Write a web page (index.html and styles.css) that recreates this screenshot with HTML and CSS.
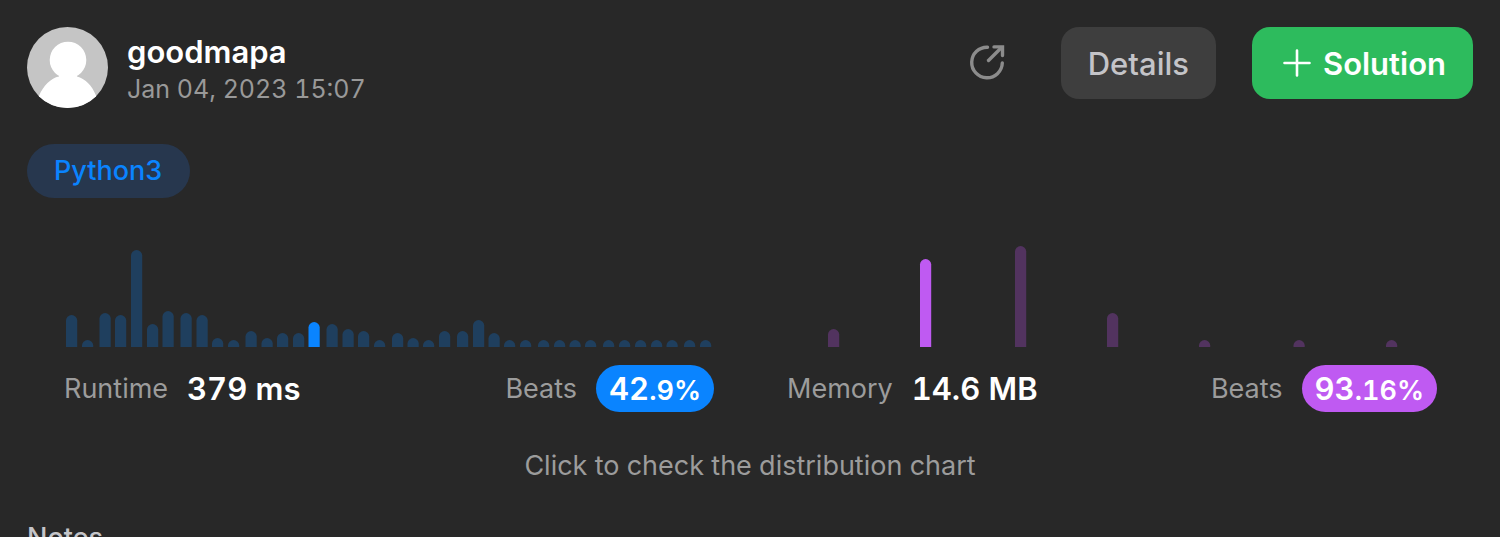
FILE: index.html
```html
<!DOCTYPE html>
<html lang="en">
<head>
<meta charset="utf-8">
<meta name="viewport" content="width=device-width, initial-scale=1">
<title>Submission</title>
<link rel="stylesheet" href="styles.css">
</head>
<body>
<main class="page">
  <header class="header">
    <svg class="avatar" viewBox="0 0 81 81" role="img" aria-label="goodmapa avatar">
      <defs><clipPath id="avatar-clip"><circle cx="40.500" cy="40.500" r="40.500"/></clipPath></defs>
      <g clip-path="url(#avatar-clip)">
        <rect width="81" height="81" fill="#c5c5c5"/>
        <circle cx="41" cy="33" r="18.300" fill="#fff"/>
        <path d="M32 46h17l1 3.500c8 2 15 9 19 19V81H12V69c4-10 12-18 20-19.500z" fill="#fff"/>
      </g>
    </svg>
    <div class="user">
      <div class="user-name">goodmapa</div>
      <time class="user-date" datetime="2023-01-04T15:07">Jan 04, 2023 15:07</time>
    </div>
    <div class="actions">
      <button class="icon-button" type="button" aria-label="Share">
        <svg class="share-icon" viewBox="0 0 40 40" fill="none" stroke="#8c8c8c" stroke-width="3.400" stroke-linecap="round" stroke-linejoin="round">
          <path d="M20.500 4.200A15.300 15.300 0 1 0 35.300 20"/>
          <path d="M21.500 17.500 34 5"/>
          <path d="M27 3.900h8.500v8.600" stroke-linejoin="miter"/>
        </svg>
      </button>
      <button class="button button-details" type="button">Details</button>
      <button class="button button-solution" type="button">
        <svg class="plus-icon" viewBox="0 0 28 28" fill="none" stroke="#fff" stroke-width="2.600" stroke-linecap="round"><path d="M14 1.500v25M1.500 14h25"/></svg>
        Solution
      </button>
    </div>
  </header>

  <div class="tags"><span class="tag">Python3</span></div>

  <section class="stats">
    <div class="stat">
      <svg class="chart runtime" viewBox="0 0 650 108" role="img" aria-label="Runtime distribution">
        <defs><path id="bar" d="M0 120V5.600a5.600 5.600 0 0 1 11.200 0V120z"/></defs>
        <g class="bars">
          <use href="#bar" x="2" y="76"/><use href="#bar" x="18" y="101"/><use href="#bar" x="35.500" y="74"/><use href="#bar" x="51" y="76"/>
          <use href="#bar" x="67" y="11"/><use href="#bar" x="83" y="85"/><use href="#bar" x="98.500" y="72"/><use href="#bar" x="116.500" y="74"/>
          <use href="#bar" x="132.500" y="76"/><use href="#bar" x="148" y="99"/><use href="#bar" x="164" y="101"/><use href="#bar" x="181.500" y="92"/>
          <use href="#bar" x="197.500" y="99"/><use href="#bar" x="213" y="94"/><use href="#bar" x="229" y="94"/><use class="current" href="#bar" x="244.500" y="83"/>
          <use href="#bar" x="262.500" y="85"/><use href="#bar" x="278.500" y="90"/><use href="#bar" x="294" y="92"/><use href="#bar" x="310" y="101"/>
          <use href="#bar" x="328" y="94"/><use href="#bar" x="343.500" y="99"/><use href="#bar" x="359" y="101"/><use href="#bar" x="375" y="92"/>
          <use href="#bar" x="393" y="92"/><use href="#bar" x="409" y="81"/><use href="#bar" x="424.500" y="94"/><use href="#bar" x="440" y="101"/>
          <use href="#bar" x="456" y="101"/><use href="#bar" x="474" y="101"/><use href="#bar" x="490" y="101"/><use href="#bar" x="505.500" y="101"/>
          <use href="#bar" x="521" y="101"/><use href="#bar" x="539" y="101"/><use href="#bar" x="555" y="101"/><use href="#bar" x="571" y="101"/>
          <use href="#bar" x="587" y="101"/><use href="#bar" x="602.500" y="101"/><use href="#bar" x="620" y="101"/><use href="#bar" x="636" y="101"/>
        </g>
      </svg>
      <div class="stat-row">
        <span class="label">Runtime</span>
        <span class="value">379 ms</span>
        <span class="label beats">Beats</span>
        <span class="badge badge-runtime">42<span class="fraction">.9%</span></span>
      </div>
    </div>
    <div class="stat">
      <svg class="chart memory" viewBox="0 0 650 108" role="img" aria-label="Memory distribution">
        <g class="bars">
          <use href="#bar" x="41" y="90"/><use class="current" href="#bar" x="133" y="20"/><use href="#bar" x="228" y="7"/><use href="#bar" x="320" y="74"/>
          <use href="#bar" x="412" y="101"/><use href="#bar" x="506.500" y="101"/><use href="#bar" x="599" y="101"/>
        </g>
      </svg>
      <div class="stat-row">
        <span class="label">Memory</span>
        <span class="value">14.6 MB</span>
        <span class="label beats">Beats</span>
        <span class="badge badge-memory">93<span class="fraction">.16%</span></span>
      </div>
    </div>
  </section>
  <p class="hint">Click to check the distribution chart</p>
  <h2 class="notes">Notes</h2>
</main>
</body>
</html>
```
FILE: styles.css
```css
* { box-sizing: border-box; }
html { scrollbar-width: none; background: #282828; }
body {
  margin: 0;
  background: #282828;
  color: #fff;
  font-family: Inter, "Liberation Sans", sans-serif;
  font-variant-numeric: tabular-nums;
}
.page { padding: 27px; }
.header { display: flex; align-items: flex-start; }
.avatar { width: 81px; height: 81px; flex: none; margin-right: 19px; }
.user { flex: 1; padding-top: 7px; }
.user-name { font-size: 31px; font-weight: 600; line-height: 36px; }
.user-date { display: block; font-size: 25px; line-height: 38px; color: #999; }
.actions { display: flex; align-items: center; gap: 36px; }
button { border: 0; margin: 0; font-family: inherit; cursor: pointer; }
.icon-button { display: flex; padding: 16px 18px; background: none; }
.share-icon { width: 40px; height: 40px; }
.button {
  display: flex;
  align-items: center;
  justify-content: center;
  height: 72px;
  border-radius: 18px;
  padding: 0 27px;
  font-size: 31px;
}
.button-details { background: #3e3e3e; color: #c4c4c8; font-weight: 500; }
.button-solution { background: #2dbb5d; color: #fff; font-weight: 600; gap: 12px; padding: 0 27px 0 31px; }
.plus-icon { width: 28px; height: 28px; }
.tags { display: flex; margin-top: 36px; }
.tag {
  padding: 0 27px;
  border-radius: 27px;
  background: #27374e;
  color: #0a84ff;
  font-size: 27px;
  font-weight: 500;
  line-height: 54px;
}
.stats { display: grid; grid-template-columns: 1fr 1fr; gap: 73px; margin: 41px 36px 0 37px; }
.chart { display: block; width: 100%; height: auto; }
.runtime { fill: #1f3f5e; }
.runtime .current { fill: #0a84ff; }
.memory { fill: #52335f; }
.memory .current { fill: #bf5af2; }
.stat-row { display: flex; align-items: center; margin-top: 18px; white-space: nowrap; }
.label { font-size: 27px; color: #9c9c9c; }
.value { margin-left: 19px; font-size: 31px; font-weight: 600; }
.beats { margin-left: auto; }
.badge { margin-left: 19px; padding: 0 13px; border-radius: 24px; font-size: 31px; font-weight: 600; line-height: 47px; }
.fraction { font-size: 27px; line-height: 1; }
.badge-runtime { background: #0a84ff; }
.badge-memory { background: #bf5af2; }
.hint { margin: 36px 0 0; text-align: center; font-size: 27px; line-height: 36px; color: #9c9c9c; }
.notes { margin: 36px 0 0; font-size: 27px; font-weight: 500; line-height: 36px; color: #c4c4c8; }
```
